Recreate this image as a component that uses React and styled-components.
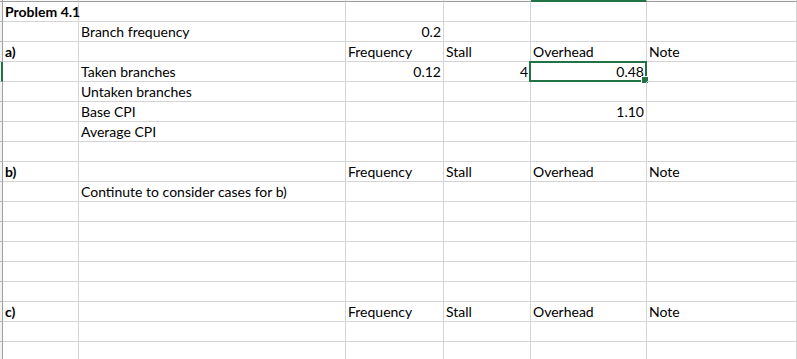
import React from "react";
import styled, { createGlobalStyle } from "styled-components";

const GlobalStyle = createGlobalStyle`
  html, body {
    margin: 0;
    padding: 0;
    background: #ffffff;
    overflow: hidden;
  }
`;

const COLS = ["A", "B", "C", "D", "E", "F"];
const SELECTED = { row: 3, col: 4 };

const head = (v) => ({ v, bold: true });
const num = (v) => ({ v, num: true });
const labels = ["", "Frequency", "Stall", "Overhead", "Note"];

// one entry per sheet row, cells from column A
const rows = [
  [head("Problem 4.1")],
  ["", "Branch frequency", num("0.2")],
  [head("a)"), ...labels],
  ["", "Taken branches", num("0.12"), num("4"), num("0.48")],
  ["", "Untaken branches"],
  ["", "Base CPI", "", "", num("1.10")],
  ["", "Average CPI"],
  [],
  [head("b)"), ...labels],
  ["", "Continute to consider cases for b)"],
  [],
  [],
  [],
  [],
  [],
  [head("c)"), ...labels],
  [],
  [],
];

const Sheet = styled.div`
  display: grid;
  grid-template-columns: 3px 76px 267px 98px 87px 116px 1fr;
  grid-template-rows: 2px;
  grid-auto-rows: 20px;
  width: 797px;
  height: 359px;
  overflow: hidden;
  font-family: Lato, "Liberation Sans", sans-serif;
  font-size: 14px;
  color: #000000;
`;

const Corner = styled.div`
  background: #f3f3f3;
  border-right: 1px solid #9f9f9f;
  border-bottom: 1px solid #9f9f9f;
  box-sizing: border-box;
`;

const ColHead = styled.div`
  box-sizing: border-box;
  background: #f7f7f7;
  border-right: 1px solid #d4d4d4;
  border-bottom: ${({ $active }) =>
    $active ? "2px solid #217346" : "1px solid #9f9f9f"};
`;

const RowHead = styled.div`
  box-sizing: border-box;
  background: #f3f3f3;
  border-bottom: 1px solid #b4b4b4;
  border-right: ${({ $active }) =>
    $active ? "2px solid #217346" : "1px solid #9f9f9f"};
`;

const Cell = styled.div`
  position: relative;
  box-sizing: border-box;
  display: flex;
  align-items: flex-end;
  justify-content: ${({ $num }) => ($num ? "flex-end" : "flex-start")};
  padding: 0 2px 1px 2px;
  border-right: 1px solid #d4d4d4;
  border-bottom: 1px solid #d4d4d4;
  font-weight: ${({ $bold }) => ($bold ? 700 : 400)};
  white-space: nowrap;
  line-height: 17px;
`;

const Selection = styled.div`
  position: absolute;
  left: -2px;
  top: -1px;
  width: 118px;
  height: 21px;
  box-sizing: border-box;
  border: 2px solid #217346;
  pointer-events: none;
`;

const Handle = styled.div`
  position: absolute;
  right: -3px;
  bottom: -3px;
  width: 6px;
  height: 6px;
  background: #217346;
  box-shadow: 0 0 0 1px #ffffff;
`;

export default function App() {
  return (
    <>
      <GlobalStyle />
      <Sheet>
        <Corner />
        {COLS.map((c, i) => (
          <ColHead key={c} $active={i === SELECTED.col} />
        ))}
        {rows.map((row, r) => (
          <React.Fragment key={r}>
            <RowHead $active={r === SELECTED.row} />
            {COLS.map((c, i) => {
              const raw = row[i];
              const cell = typeof raw === "object" ? raw : { v: raw || "" };
              const selected = r === SELECTED.row && i === SELECTED.col;
              return (
                <Cell key={c} $num={cell.num} $bold={cell.bold}>
                  {cell.v}
                  {selected && (
                    <Selection>
                      <Handle />
                    </Selection>
                  )}
                </Cell>
              );
            })}
          </React.Fragment>
        ))}
      </Sheet>
    </>
  );
}
